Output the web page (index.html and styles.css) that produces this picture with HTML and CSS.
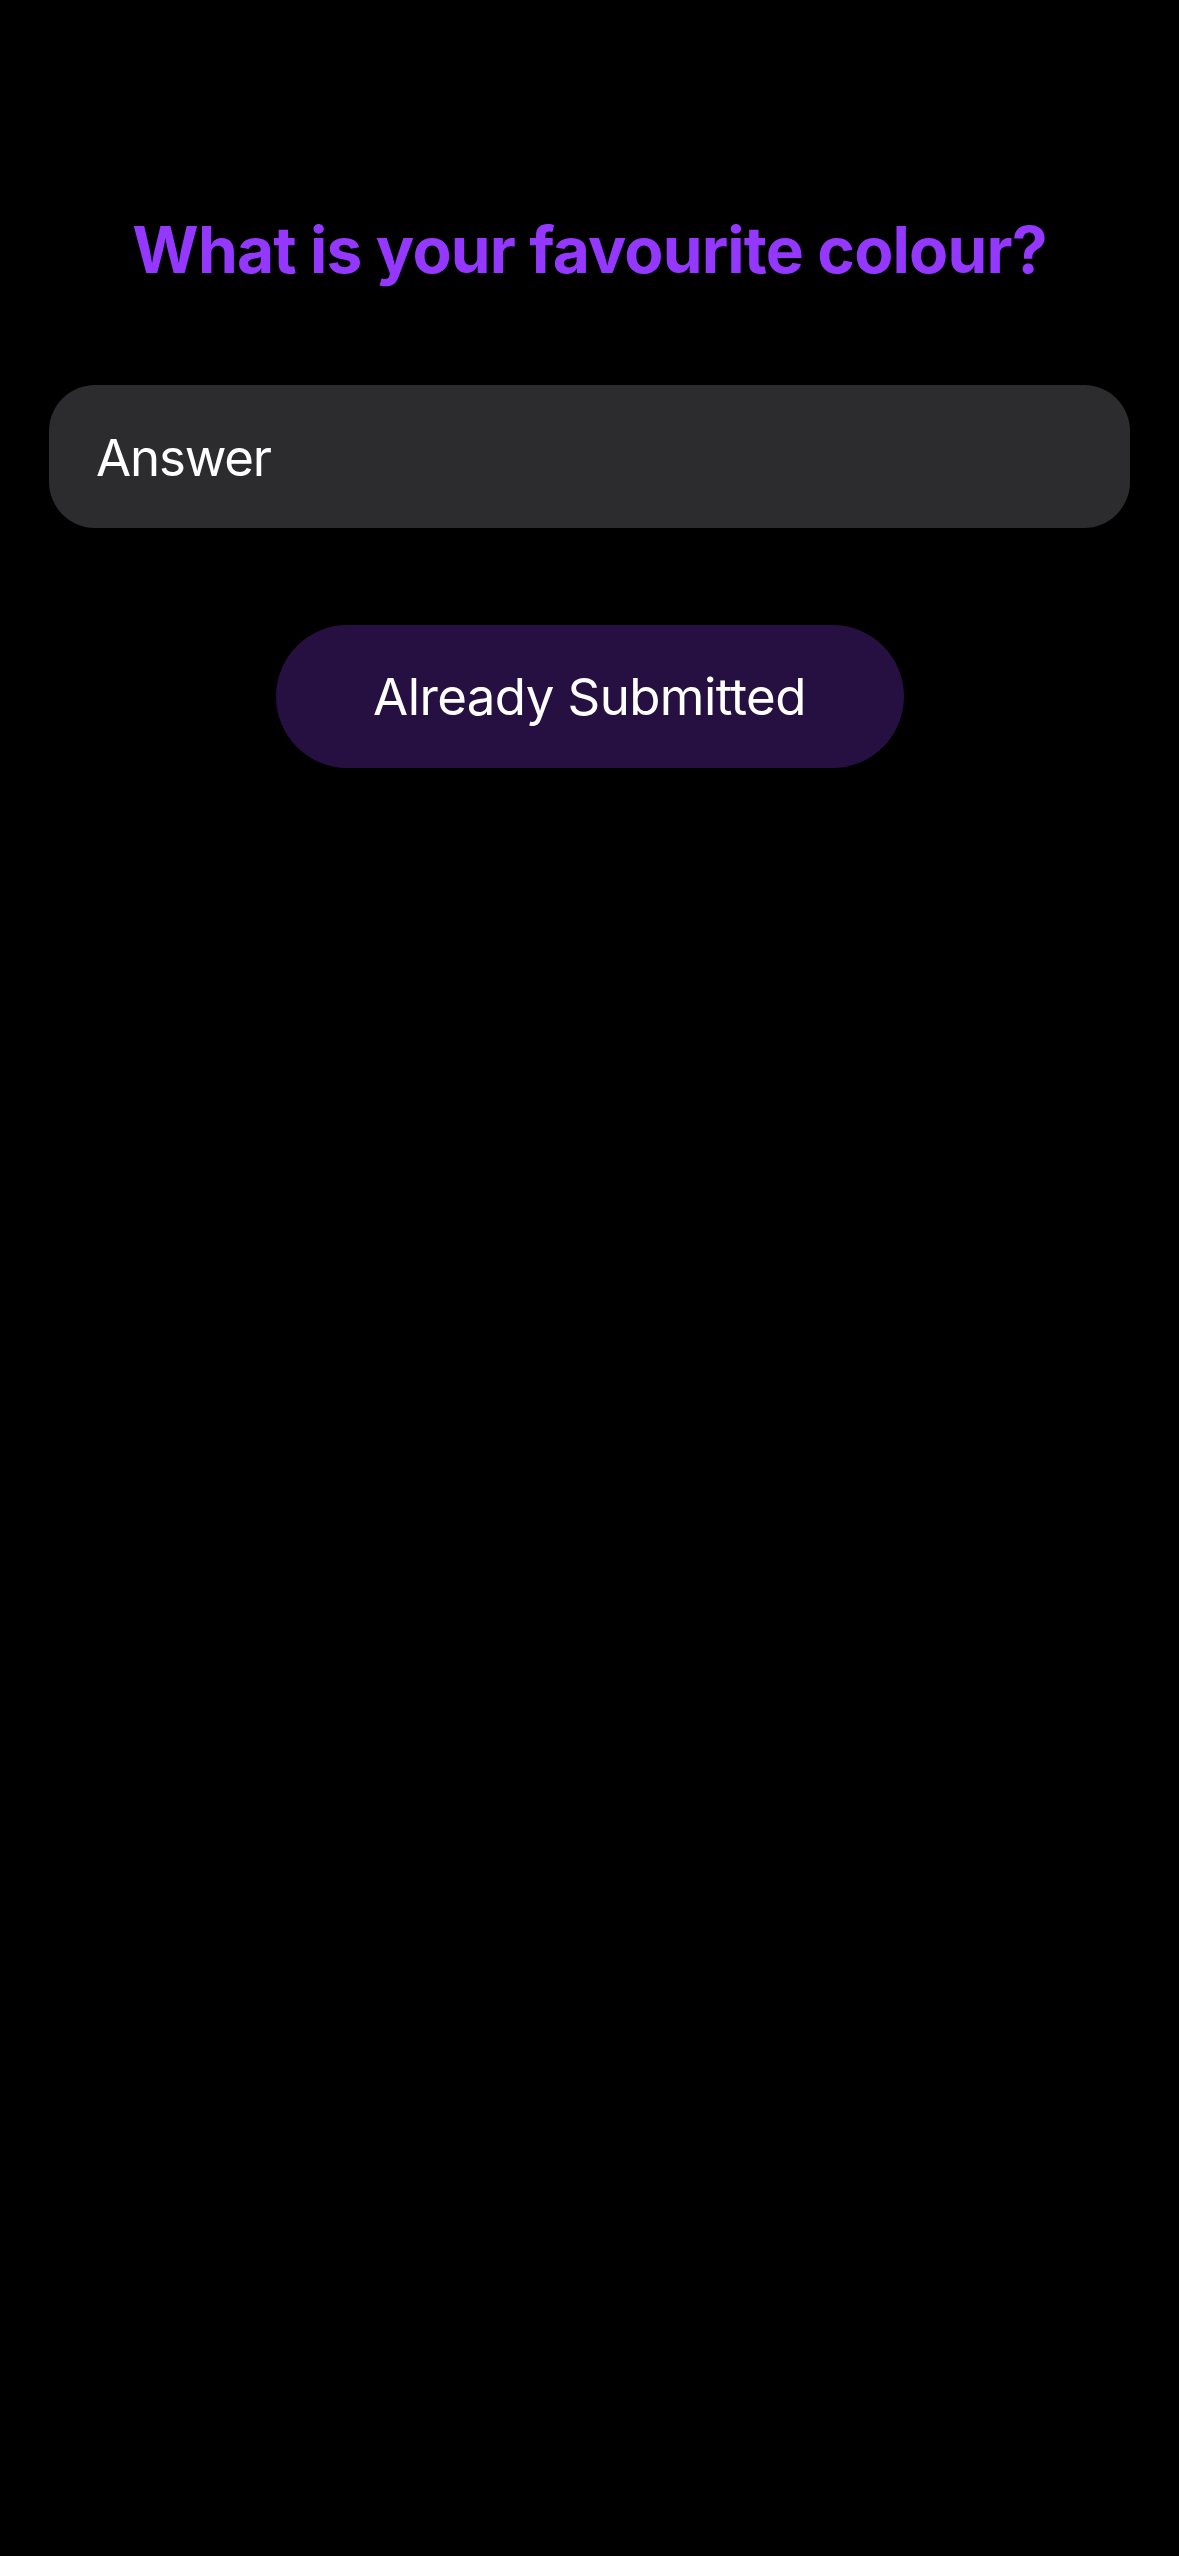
FILE: index.html
```html
<!DOCTYPE html>
<html lang="en">
<head>
<meta charset="utf-8">
<title>Question</title>
<link rel="stylesheet" href="styles.css">
</head>
<body>
<main class="screen">
  <h1 class="question">What is your favourite colour?</h1>
  <div class="answer-field"><span class="answer-placeholder">Answer</span></div>
  <div class="actions">
    <button class="submit-btn" type="button">Already Submitted</button>
  </div>
</main>
</body>
</html>
```

FILE: styles.css
```css
html, body {
  margin: 0;
  padding: 0;
  background: #000;
}
body {
  width: 1179px;
  min-height: 2556px;
  font-family: Inter, "Noto Sans", sans-serif;
  color: #fff;
}
.screen {
  display: flex;
  flex-direction: column;
  padding: 210px 49px 0 49px;
}
.question {
  margin: 0;
  text-align: center;
  font-size: 64px;
  line-height: 80px;
  font-weight: 700;
  color: #9437ff;
  letter-spacing: -0.85px;
}
.answer-field {
  margin-top: 95px;
  height: 143px;
  background: #2c2c2e;
  border-radius: 46px;
  display: flex;
  align-items: center;
  padding: 3px 47px 0 47px;
  box-sizing: border-box;
}
.answer-placeholder {
  font-size: 51px;
  line-height: 60px;
  font-weight: 400;
  color: #fff;
  letter-spacing: -1.2px;
}
.actions {
  margin-top: 97px;
  display: flex;
  justify-content: center;
}
.submit-btn {
  width: 628px;
  height: 143px;
  border: none;
  border-radius: 72px;
  background: #261041;
  color: #fff;
  font-family: Inter, "Noto Sans", sans-serif;
  font-size: 51px;
  font-weight: 400;
  letter-spacing: -0.6px;
  padding: 0;
  margin: 0;
}
```
